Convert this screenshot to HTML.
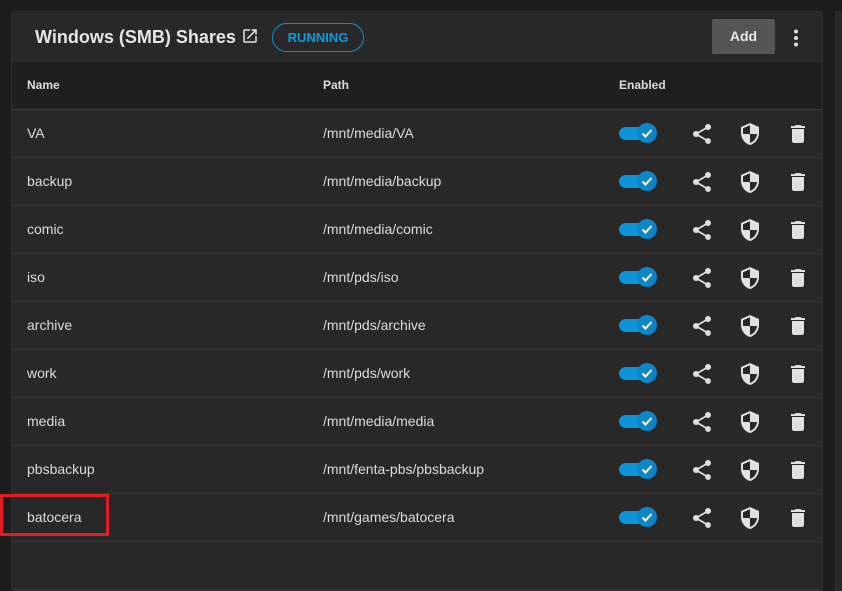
<!DOCTYPE html>
<html><head><style>
*{margin:0;padding:0;box-sizing:border-box}
body{width:842px;height:572px;background:#1c1c1c;font-family:"Liberation Sans",sans-serif;overflow:hidden;position:relative;color:#e6e6e6}
.card{position:absolute;left:11px;top:11px;width:812px;height:580px;background:#282828;border-radius:4px;border:1px solid #303030}
.card2{position:absolute;left:835px;top:11px;width:20px;height:580px;background:#282828;border:1px solid #303030}
.hdr{position:absolute;left:0;top:0;width:810px;height:50px}
.title{position:absolute;left:23px;top:15px;font-size:18px;font-weight:bold;color:#e6e6e6}
.run{position:absolute;left:260px;top:11px;width:92px;height:29px;border:1px solid #0a8ed1;border-radius:15px;color:#0a9be0;font-size:13px;font-weight:bold;text-align:center;line-height:27px}
.add{position:absolute;left:700px;top:7px;width:63px;height:35px;background:#555;border-radius:2px;color:#e8e8e8;font-weight:bold;font-size:14px;text-align:center;line-height:35px}
.dots{position:absolute;left:781px;top:17px}
.colh{position:absolute;left:0;top:50px;width:810px;height:48px;background:#1f1f1f;border-bottom:1px solid #3a3a3a;font-size:12px;font-weight:bold;color:#ddd}
.colh span,.row span{position:absolute;top:0;line-height:47px}
.row{position:absolute;left:0;width:810px;height:48px;border-bottom:1px solid #353535;font-size:14px;color:#dcdcdc}
.tg{position:absolute;left:607px;top:17px;width:32px;height:13px;background:#0b95d6;border-radius:7px}
.kn{position:absolute;left:625px;top:13px;width:20px;height:20px;background:#0a86c9;border-radius:50%}
.ic{position:absolute;top:12px}
.red{position:absolute;left:0;top:494px;width:109px;height:42px;border:3px solid #e01d25}
</style></head><body>
<div class="card">
<div class="hdr">
<div class="title">Windows (SMB) Shares <svg width="18" height="18" viewBox="0 0 24 24" style="vertical-align:-2px"><path fill="#e6e6e6" d="M19 19H5V5h7V3H5a2 2 0 0 0-2 2v14a2 2 0 0 0 2 2h14a2 2 0 0 0 2-2v-7h-2v7zM14 3v2h3.59l-9.83 9.83 1.41 1.41L19 6.41V10h2V3h-7z"/></svg></div>
<div class="run">RUNNING</div>
<div class="add">Add</div>
<svg class="dots" width="6" height="18" viewBox="0 0 6 18"><circle cx="3" cy="2.5" r="2" fill="#ddd"/><circle cx="3" cy="9" r="2" fill="#ddd"/><circle cx="3" cy="15.5" r="2" fill="#ddd"/></svg>
</div>
<div class="colh"><span style="left:15px">Name</span><span style="left:311px">Path</span><span style="left:607px">Enabled</span></div>
<div id="rows"></div>
</div>
<div class="card2"></div>
<div class="red"></div>
<script>
var d=[["VA","/mnt/media/VA"],["backup","/mnt/media/backup"],["comic","/mnt/media/comic"],["iso","/mnt/pds/iso"],["archive","/mnt/pds/archive"],["work","/mnt/pds/work"],["media","/mnt/media/media"],["pbsbackup","/mnt/fenta-pbs/pbsbackup"],["batocera","/mnt/games/batocera"],["",""]];
var h="";
d.forEach(function(r,i){
h+='<div class="row" style="top:'+(98+i*48)+'px"><span style="left:15px">'+r[0]+'</span><span style="left:311px">'+r[1]+'</span>';
if(r[0]){h+='<div class="tg"></div><div class="kn"><svg width="20" height="20" viewBox="0 0 20 20"><path d="M5.5 10.5l3 3 6-6.5" stroke="#fff" stroke-width="2" fill="none"/></svg></div>'+
'<svg class="ic" style="left:678px" width="24" height="24" viewBox="0 0 24 24"><path fill="#e0e0e0" d="M18 16.08c-.76 0-1.44.3-1.960.77L8.91 12.7c.05-.23.09-.46.09-.7s-.04-.47-.09-.7l7.05-4.11A2.99 2.99 0 1 0 15 5c0 .24.04.47.09.7L8.04 9.81A2.99 2.99 0 1 0 8.04 14.19l7.12 4.16c-.05.21-.08.43-.08.65A2.92 2.92 0 1 0 18 16.08z"/></svg>'+
'<svg class="ic" style="left:726px" width="24" height="24" viewBox="0 0 24 24"><path fill="#e0e0e0" d="M12 1L3 5v6c0 5.55 3.84 10.74 9 12 5.16-1.26 9-6.45 9-12V5l-9-4zm0 10.99h7c-.53 4.12-3.28 7.79-7 8.94V12H5V6.3l7-3.11v8.8z"/></svg>'+
'<svg class="ic" style="left:774px" width="24" height="24" viewBox="0 0 24 24"><path fill="#e0e0e0" d="M6 19c0 1.1.9 2 2 2h8c1.1 0 2-.9 2-2V7H6v12zM19 4h-3.5l-1-1h-5l-1 1H5v2h14V4z"/></svg>';}
h+='</div>';});
document.getElementById("rows").innerHTML=h;
</script>
</body></html>
